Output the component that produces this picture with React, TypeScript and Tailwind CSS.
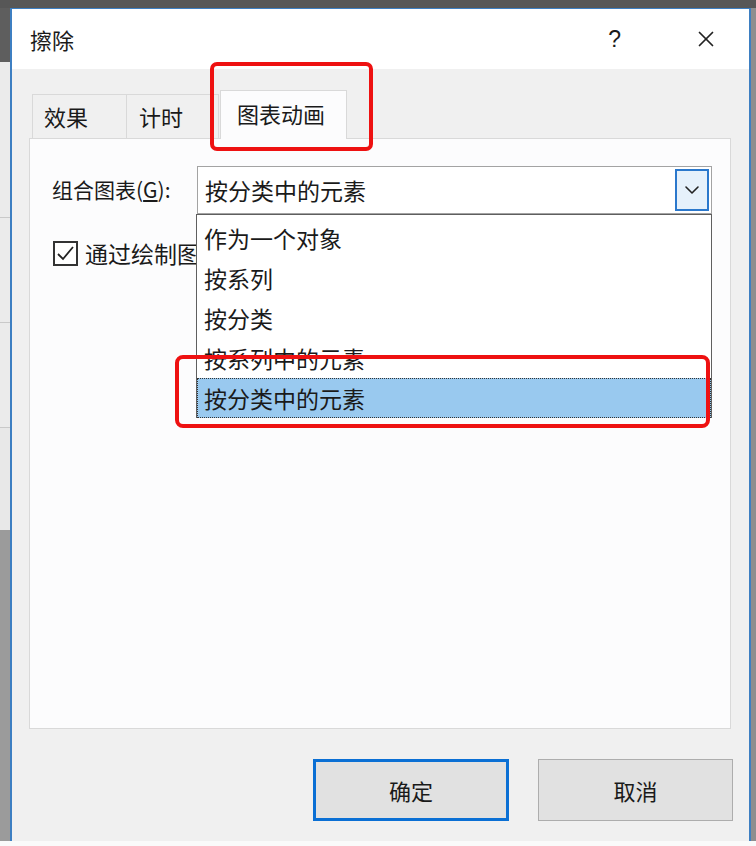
import { ChevronDown, X } from 'lucide-react';

const font = { fontFamily: '"Noto Sans CJK SC", "Noto Sans", sans-serif' };

const items = ['作为一个对象', '按系列', '按分类', '按系列中的元素', '按分类中的元素'];

export default function App() {
  return (
    <div
      className="relative w-[756px] h-[846px] bg-[#f7f7f7] flex flex-col overflow-hidden text-[#1a1a1a]"
      style={font}
    >
      {/* top band of the screen behind */}
      <div className="h-[8px] bg-[#575757] shrink-0" />

      <div className="flex h-[833px] shrink-0">
        {/* left strip of the window behind */}
        <div className="w-[10px] flex flex-col shrink-0">
          <div className="h-[54px] bg-[#5e5e5e]" />
          <div className="h-[156px] bg-[#ebebeb] border-b border-[#c9c9c9]" />
          <div className="h-[105px] bg-[#ebebeb] border-b border-[#c9c9c9]" />
          <div className="h-[105px] bg-[#ebebeb] border-b border-[#c9c9c9]" />
          <div className="h-[102px] bg-[#e8e8e8]" />
          <div className="flex-1 bg-[#9b9b9b]" />
        </div>

        {/* dialog */}
        <div className="w-[741px] shrink-0 flex flex-col border-x-2 border-t border-[#3d7fc2] bg-[#f0f0f0]">
          {/* title bar */}
          <div className="h-[60px] bg-white flex items-center shrink-0">
            <span className="ml-[18px] text-[22px]">擦除</span>
            <span className="ml-auto text-[23px] mr-[72px]" style={{ fontFamily: '"Liberation Sans", sans-serif' }}>
              ?
            </span>
            <X className="w-[26px] h-[26px] mr-[30px] text-[#222]" strokeWidth={1.6} />
          </div>

          {/* body */}
          <div className="flex-1 flex flex-col pl-[17px] pr-[18px]">
            {/* tabs */}
            <div className="flex items-end h-[69px] pl-[3px] shrink-0">
              <div className="w-[95px] h-[44px] border border-b-0 border-[#d9d9d9] bg-[#f0f0f0] flex items-center pl-[11px] text-[22px]">
                效果
              </div>
              <div className="w-[92px] h-[44px] border border-l-0 border-b-0 border-[#d9d9d9] bg-[#f0f0f0] flex items-center pl-[12px] text-[22px]">
                计时
              </div>
              <div className="relative z-10 ml-[1px] -mb-px w-[127px] h-[49px] border border-b-0 border-[#d9d9d9] bg-[#fcfcfd] flex items-start pt-[6px] pl-[16px] text-[22px]">
                图表动画
              </div>
            </div>

            {/* panel */}
            <div className="relative h-[591px] bg-[#fcfcfd] border border-[#d9d9d9] shrink-0">
              <div className="flex items-center pt-[27px] pl-[22px]">
                <span className="w-[145px] text-[21px]">
                  组合图表(<span className="underline underline-offset-2">G</span>):
                </span>
                <div className="w-[515px] h-[48px] border border-[#a3a3a3] bg-white flex items-center pl-[7px] pr-[2px]">
                  <span className="text-[23px]">按分类中的元素</span>
                  <div className="ml-auto w-[34px] h-[42px] border-2 border-[#2b78cc] bg-[#e6f1fb] flex items-center justify-center">
                    <ChevronDown className="w-[24px] h-[24px] text-[#222]" strokeWidth={1.6} />
                  </div>
                </div>
              </div>

              <div className="flex items-center pt-[22px] pl-[23px]">
                <div className="w-[25px] h-[25px] border-2 border-[#333] bg-white flex items-center justify-center shrink-0">
                  <svg width="19" height="19" viewBox="0 0 19 19">
                    <path d="M2 10 L7 15 L17 3" fill="none" stroke="#222" strokeWidth="1.8" />
                  </svg>
                </div>
                {/* the rest of the label sits under the open list */}
                <span className="ml-[7px] w-[111px] overflow-hidden whitespace-nowrap text-[23px]">
                  通过绘制图表背景启动动画效果
                </span>
              </div>

              {/* open drop-down list */}
              <div className="absolute z-20 left-[166px] top-[75px] w-[516px] h-[204px] bg-white border border-[#5f5f5f] pt-[3px]">
                {items.map((item, i) => {
                  const selected = i === items.length - 1;
                  return (
                    <div
                      key={item}
                      className={
                        selected
                          ? 'h-[40px] flex items-center pl-[6px] text-[23px] bg-[#99c9ef] border border-dotted border-[#333]'
                          : 'h-[40px] flex items-center pl-[7px] text-[23px]'
                      }
                    >
                      {item}
                    </div>
                  );
                })}
              </div>
            </div>

            {/* buttons */}
            <div className="flex justify-end gap-[29px] pt-[30px]">
              <button className="w-[196px] h-[62px] border-[3px] border-[#0a6fd4] bg-[#e1e1e1] text-[22px]">
                确定
              </button>
              <button className="w-[195px] h-[62px] border border-[#adadad] bg-[#e1e1e1] text-[22px] mr-[-2px]">
                取消
              </button>
            </div>
          </div>
        </div>

        {/* right strip */}
        <div className="flex-1 bg-[#8e8e8e]" />
      </div>

      <div className="flex-1 bg-[#fafafa]" />

      {/* red annotation boxes */}
      <div className="absolute z-30 left-[210px] top-[62px] w-[163px] h-[89px] border-4 border-[#ee1111] rounded-[7px]" />
      <div className="absolute z-30 left-[175px] top-[355px] w-[535px] h-[73px] border-4 border-[#ee1111] rounded-[8px]" />
    </div>
  );
}
